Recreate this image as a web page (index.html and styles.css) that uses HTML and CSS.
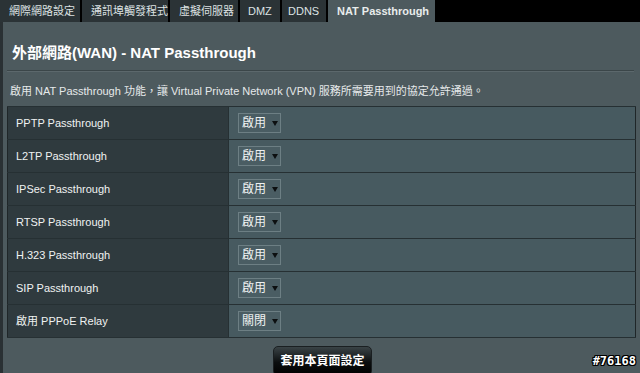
FILE: index.html
```html
<!DOCTYPE html>
<html lang="zh-Hant">
  <head>
    <meta charset="UTF-8" />
    <title>NAT Passthrough</title>
    <link rel="stylesheet" href="styles.css">
  </head>
  <body>
    <div class="tabs">
      <div class="tab t1">網際網路設定</div>
      <div class="tab t2">通訊埠觸發程式</div>
      <div class="tab t3">虛擬伺服器</div>
      <div class="tab t4">DMZ</div>
      <div class="tab t5">DDNS</div>
      <div class="tab active">NAT Passthrough</div>
    </div>

    <div class="panel">
      <h1>外部網路(WAN) - NAT Passthrough</h1>
      <div class="desc">啟用 NAT Passthrough 功能，讓 Virtual Private Network (VPN) 服務所需要用到的協定允許通過。</div>

      <table class="settings">
        <tr><th>PPTP Passthrough</th><td><span class="sel">啟用<i></i></span></td></tr>
        <tr><th>L2TP Passthrough</th><td><span class="sel">啟用<i></i></span></td></tr>
        <tr><th>IPSec Passthrough</th><td><span class="sel">啟用<i></i></span></td></tr>
        <tr><th>RTSP Passthrough</th><td><span class="sel">啟用<i></i></span></td></tr>
        <tr><th>H.323 Passthrough</th><td><span class="sel">啟用<i></i></span></td></tr>
        <tr><th>SIP Passthrough</th><td><span class="sel">啟用<i></i></span></td></tr>
        <tr><th>啟用 PPPoE Relay</th><td><span class="sel">關閉<i></i></span></td></tr>
      </table>

      <div class="actions">
        <div class="apply">套用本頁面設定</div>
      </div>
    </div>

    <div class="mark">#76168</div>
  </body>
</html>
```

FILE: styles.css
```css
* {
  box-sizing: border-box;
}
body {
  margin: 0;
  background: #4d5a5e;
  font-family: 'Liberation Sans', 'Noto Sans CJK TC', sans-serif;
  color: #fff;
  height: 373px;
  overflow: hidden;
  position: relative;
}
.tabs {
  display: flex;
  height: 22px;
  background: #000;
}
.tab {
  background: #2b3336;
  color: #dde2e3;
  font-size: 11px;
  line-height: 22px;
  margin-right: 2px;
  padding-left: 9px;
  height: 22px;
}
.t1 { width: 80px; }
.t2 { width: 86px; }
.t3 { width: 68px; }
.t4 { width: 40px; padding-left: 8px; }
.t5 { width: 44px; padding-left: 6px; margin-right: 2px; }
.tab.active {
  background: #4d5a5e;
  width: 107px;
  padding-left: 9px;
  font-weight: bold;
  color: #e8ecec;
}
.panel {
  border-left: 3px solid #2a3134;
  padding: 0 4px 0 4px;
  height: 351px;
}
h1 {
  margin: 0;
  padding: 21px 0 0 5px;
  font-size: 15px;
  line-height: 20px;
  height: 49px;
  border-bottom: 1px solid #3b4649;
  box-shadow: 0 1px 0 #5c686c;
  margin-right: 2px;
}
.desc {
  font-size: 11px;
  color: #e6e9ea;
  padding: 11px 0 0 3px;
  height: 35px;
}
.settings {
  width: 629px;
  border-collapse: collapse;
  border: 1px solid #1f2628;
}
.settings tr {
  height: 33px;
}
.settings th,
.settings td {
  border-top: 1px solid #263033;
  border-bottom: 1px solid #263033;
  padding: 0;
  font-size: 11px;
  line-height: 14px;
  font-weight: normal;
  text-align: left;
}
.settings th {
  width: 221px;
  background: #2f3a3e;
  padding-left: 8px;
  color: #f0f2f2;
  border-right: 1px solid #263033;
}
.settings td {
  background: #475a60;
  padding-left: 9px;
}
.sel {
  display: inline-flex;
  align-items: center;
  width: 43px;
  height: 20px;
  border: 1px solid #6d7f84;
  background: #4a5d63;
  color: #eef1f1;
  font-size: 12px;
  padding-left: 3px;
  vertical-align: middle;
}
.sel i {
  width: 0;
  height: 0;
  border-left: 3px solid transparent;
  border-right: 3px solid transparent;
  border-top: 5px solid #0c0f10;
  margin-left: 6px;
}
.actions {
  display: flex;
  justify-content: center;
  padding: 8px 0 0 2px;
}
.apply {
  width: 99px;
  height: 30px;
  border-radius: 5px;
  background: linear-gradient(#3a4346, #0b0e0f 55%, #000);
  border: 1px solid #1a1f21;
  color: #fff;
  font-weight: bold;
  font-size: 12px;
  text-align: center;
  line-height: 29px;
}
.mark {
  position: absolute;
  right: 4px;
  bottom: 5px;
  font-family: 'DejaVu Sans Mono', monospace;
  font-weight: bold;
  font-size: 12px;
  color: #fff;
  text-shadow: 1px 0 0 #000, -1px 0 0 #000, 0 1px 0 #000, 0 -1px 0 #000, 1px 1px 0 #000, -1px -1px 0 #000, 1px -1px 0 #000, -1px 1px 0 #000;
}
```
